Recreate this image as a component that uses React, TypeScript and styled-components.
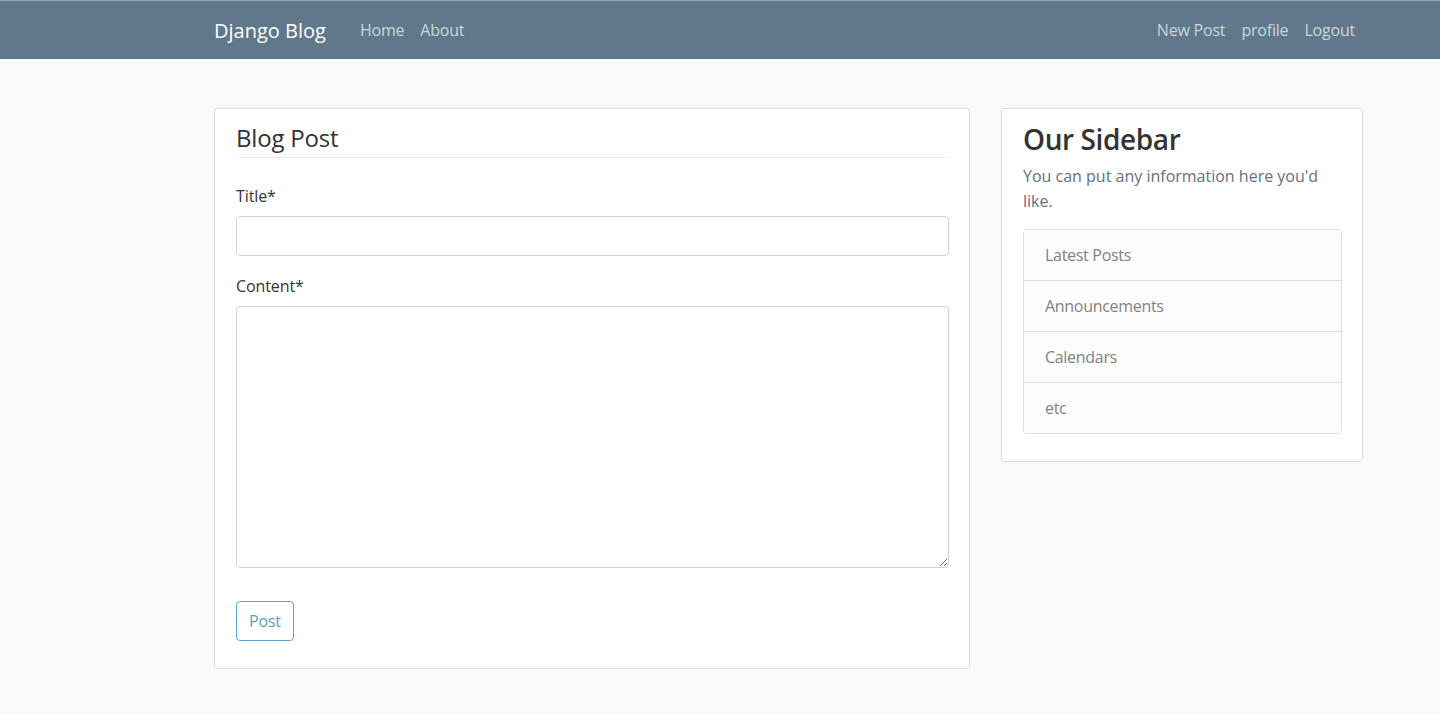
import React from "react";
import styled, { createGlobalStyle } from "styled-components";

const GlobalStyle = createGlobalStyle`
  * { box-sizing: border-box; }
  html, body { margin: 0; padding: 0; }
  body {
    background: #fafafa;
    color: #333333;
    font-family: "Open Sans", "Noto Sans", "Liberation Sans", sans-serif;
    font-size: 16px;
    line-height: 1.5;
  }
`;

const Header = styled.header`
  background: #5f788a;
  border-top: 1px solid #9aa6b0;
  height: 59px;
`;

const Container = styled.div`
  width: 1179px;
  margin-left: 199px;
  padding: 0 15px;
`;

const HeaderInner = styled(Container).attrs({ as: "nav" })`
  height: 100%;
  display: flex;
  align-items: center;
`;

const Brand = styled.a`
  color: #ffffff;
  font-size: 20px;
  letter-spacing: 0;
  text-decoration: none;
  margin-right: 26px;
  padding-top: 2px;
`;

const NavGroup = styled.div<{ $right?: boolean }>`
  display: flex;
  align-items: center;
  margin-left: ${(p) => (p.$right ? "auto" : "0")};
`;

const NavLink = styled.a`
  color: #cbd5db;
  font-size: 16px;
  letter-spacing: -0.2px;
  padding: 8px 8px;
  text-decoration: none;
`;

const Main = styled(Container).attrs({ as: "main" })`
  padding-top: 49px;
  display: grid;
  grid-template-columns: 756px 362px;
  column-gap: 31px;
  align-items: start;
`;

const Section = styled.section`
  background: #ffffff;
  border: 1px solid #dddddd;
  border-radius: 3px;
  padding: 10px 20px 11px 21px;
`;

const Legend = styled.h2`
  margin: 0 0 26px;
  font-size: 24px;
  font-weight: 400;
  line-height: 38px;
  letter-spacing: -0.2px;
  border-bottom: 1px solid #e9ecef;
`;

const FormGroup = styled.div<{ $gap?: number }>`
  margin-bottom: ${(p) => p.$gap ?? 16}px;
`;

const Label = styled.label`
  display: block;
  font-size: 16px;
  line-height: 24px;
  letter-spacing: -0.1px;
  margin-bottom: 8px;
`;

const Input = styled.input`
  display: block;
  width: 100%;
  height: 40px;
  border: 1px solid #ced4da;
  border-radius: 4px;
  background: #fff;
  padding: 6px 12px;
  font: inherit;
`;

const TextArea = styled.textarea`
  display: block;
  width: 100%;
  height: 262px;
  border: 1px solid #ced4da;
  border-radius: 4px;
  background: #fff;
  padding: 6px 12px;
  font: inherit;
  resize: vertical;
`;

const Button = styled.button`
  height: 40px;
  padding: 0 12px;
  border: 1px solid #5aa5d3;
  border-radius: 4px;
  background: transparent;
  color: #5c9fc8;
  font-family: inherit;
  font-size: 16px;
  letter-spacing: -0.2px;
  cursor: pointer;
`;

const SideTitle = styled.h3`
  margin: 0 0 5px;
  font-size: 28px;
  font-weight: 600;
  line-height: 40px;
  letter-spacing: -0.4px;
  color: #333;
`;

const Muted = styled.p`
  margin: 0 0 15px;
  color: #63717d;
  font-size: 16px;
  line-height: 25px;
  letter-spacing: 0;
`;

const ListGroup = styled.ul`
  list-style: none;
  margin: 0 0 16px;
  padding: 0;
  border: 1px solid #dfdfdf;
  border-radius: 4px;
  overflow: hidden;
`;

const ListItem = styled.li`
  background: #fdfdfe;
  color: #818182;
  padding: 13px 21px;
  line-height: 24px;
  font-size: 16px;
  letter-spacing: -0.3px;
  & + & {
    border-top: 1px solid #dfdfdf;
  }
`;

const sidebarItems = ["Latest Posts", "Announcements", "Calendars", "etc"];

export default function App() {
  return (
    <>
      <GlobalStyle />
      <Header>
        <HeaderInner>
          <Brand href="#">Django Blog</Brand>
          <NavGroup>
            <NavLink href="#">Home</NavLink>
            <NavLink href="#">About</NavLink>
          </NavGroup>
          <NavGroup $right>
            <NavLink href="#">New Post</NavLink>
            <NavLink href="#">profile</NavLink>
            <NavLink href="#">Logout</NavLink>
          </NavGroup>
        </HeaderInner>
      </Header>
      <Main>
        <Section>
          <form onSubmit={(e) => e.preventDefault()}>
            <Legend>Blog Post</Legend>
            <FormGroup $gap={18}>
              <Label htmlFor="title">Title*</Label>
              <Input id="title" type="text" />
            </FormGroup>
            <FormGroup $gap={33}>
              <Label htmlFor="content">Content*</Label>
              <TextArea id="content" />
            </FormGroup>
            <FormGroup>
              <Button type="submit">Post</Button>
            </FormGroup>
          </form>
        </Section>
        <Section>
          <SideTitle>Our Sidebar</SideTitle>
          <Muted>You can put any information here you'd like.</Muted>
          <ListGroup>
            {sidebarItems.map((item) => (
              <ListItem key={item}>{item}</ListItem>
            ))}
          </ListGroup>
        </Section>
      </Main>
    </>
  );
}
